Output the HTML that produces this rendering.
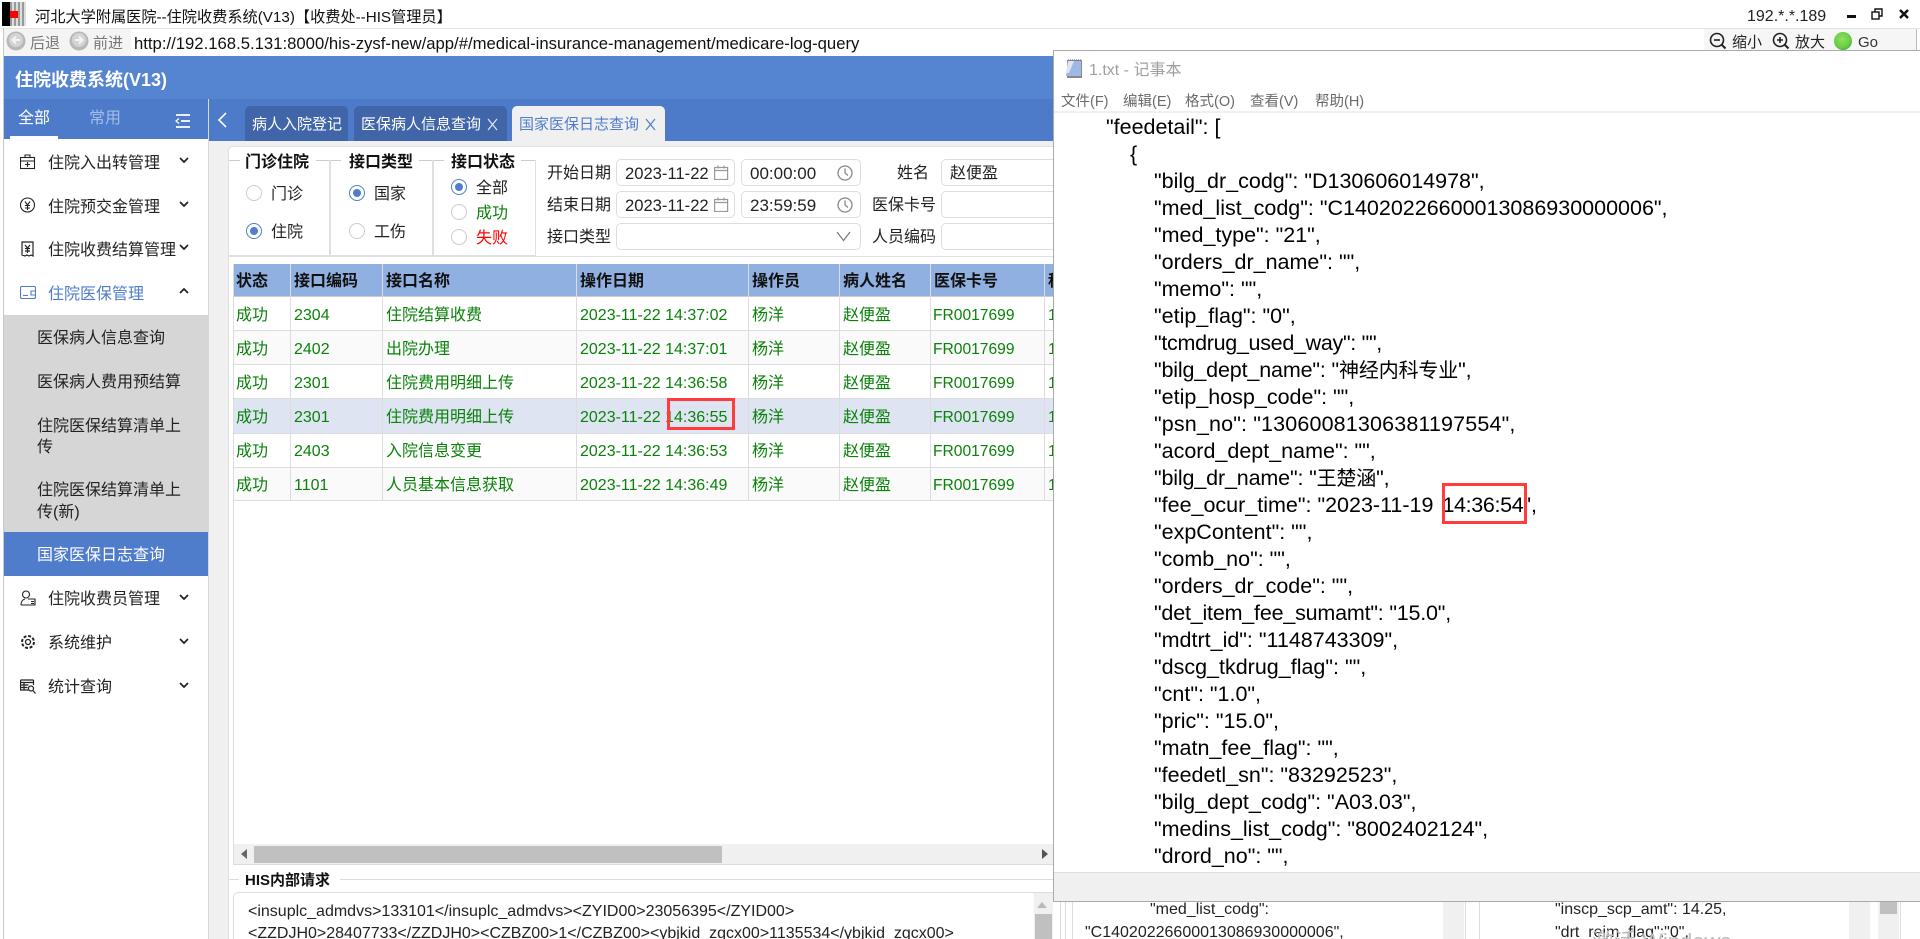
<!DOCTYPE html>
<html><head><meta charset="utf-8"><style>
html,body{margin:0;padding:0;width:1920px;height:939px;overflow:hidden;background:#fff}
body{font-family:"Liberation Sans","Noto Sans CJK SC",sans-serif;color:#111;position:relative}
.a,.t,svg{position:absolute}
.t{white-space:nowrap;line-height:20px;height:20px;margin-top:2px}
.p1{margin-top:1px}
.p0{margin-top:0}
.m{font-size:16px;left:48px;color:#222}
.s{font-size:16px;left:37px;color:#222}
.h{font-size:16px;font-weight:bold;top:270px;color:#111}
.g{font-size:16px;color:#0a820a}
.f{font-size:15.6px}
.l{font-size:16px;color:#222}
.v{font-size:17px;color:#222;margin-top:1px}
.i{background:#fff;border:1px solid #ddd;border-radius:5px;box-sizing:border-box}
.n{font-size:21.5px;left:1154px;color:#000;line-height:27px;height:27px;margin-top:1px}
.n b{font-weight:normal;font-size:20px}
.r{width:14px;height:14px;border:1px solid #ccc;border-radius:50%;background:#fff}
.rc{width:14px;height:14px;border:1px solid #4f7ccb;border-radius:50%;background:#fff}
.rc:after{content:"";position:absolute;left:3px;top:3px;width:8px;height:8px;border-radius:50%;background:#4f7ccb}
</style></head><body>

<!-- title bar -->
<div class="a" style="left:2px;top:2px;width:8px;height:24px;background:#000"></div>
<div class="a" style="left:10px;top:2px;width:16px;height:24px;background:repeating-linear-gradient(90deg,#999 0 2px,#ddd 2px 4px)"></div>
<div class="a" style="left:10px;top:11px;width:8px;height:7px;background:#f00"></div>
<div class="t" style="left:35px;top:6px;font-size:15.2px">河北大学附属医院--住院收费系统(V13)【收费处--HIS管理员】</div>
<div class="t p1" style="left:1747px;top:6px;font-size:16px;color:#222">192.*.*.189</div>
<div class="a" style="left:1847px;top:15px;width:9px;height:3px;background:#111"></div>
<svg style="left:1871px;top:8px" width="12" height="12" viewBox="0 0 12 12" fill="none" stroke="#111" stroke-width="1.4"><rect x="1" y="4" width="7" height="7"/><path d="M4 4V1h7v7H8"/></svg>
<svg style="left:1898px;top:8px" width="12" height="12" viewBox="0 0 12 12" fill="none" stroke="#111" stroke-width="2.4"><path d="M2 2l8 8M10 2l-8 8"/></svg>

<!-- address bar -->
<div class="a" style="left:0;top:28px;width:1920px;height:1px;background:#e2e2e2"></div>
<div class="a" style="left:3px;top:28px;width:1px;height:911px;background:#c8c8c8"></div>
<div class="a" style="left:4px;top:29px;width:127px;height:27px;background:#f4f4f4"></div>
<svg style="left:6px;top:30px" width="20" height="22" viewBox="0 0 20 22"><circle cx="10" cy="11" r="9.500" fill="#b8b8b8"/><circle cx="10" cy="10" r="7" fill="#d4d4d4"/><path d="M14 10H7M10 6.500L6.500 10l3.500 3.500" fill="none" stroke="#f4f4f4" stroke-width="2"/></svg>
<div class="t" style="left:30px;top:32px;font-size:15px;color:#777">后退</div>
<svg style="left:69px;top:30px" width="20" height="22" viewBox="0 0 20 22"><circle cx="10" cy="11" r="9.500" fill="#b8b8b8"/><circle cx="10" cy="10" r="7" fill="#d4d4d4"/><path d="M6 10h7M10 6.500l3.500 3.500-3.500 3.500" fill="none" stroke="#f4f4f4" stroke-width="2"/></svg>
<div class="t" style="left:93px;top:32px;font-size:15px;color:#777">前进</div>
<div class="t" style="left:134px;top:32px;font-size:16.7px;color:#111">http://192.168.5.131:8000/his-zysf-new/app/#/medical-insurance-management/medicare-log-query</div>
<div class="a" style="left:1704px;top:29px;width:212px;height:21px;background:#f6f6f6"></div>
<svg style="left:1709px;top:32px" width="18" height="18" viewBox="0 0 18 18" fill="none" stroke="#222" stroke-width="1.6"><circle cx="8" cy="8" r="6.5"/><path d="M5 8h6"/><path d="M12.5 12.5l4 4" stroke-width="2"/></svg>
<div class="t p1" style="left:1732px;top:32px;font-size:15px;color:#222">缩小</div>
<svg style="left:1772px;top:32px" width="18" height="18" viewBox="0 0 18 18" fill="none" stroke="#222" stroke-width="1.6"><circle cx="8" cy="8" r="6.5"/><path d="M5 8h6M8 5v6"/><path d="M12.5 12.5l4 4" stroke-width="2"/></svg>
<div class="t p1" style="left:1795px;top:32px;font-size:15px;color:#222">放大</div>
<div class="a" style="left:1834px;top:32px;width:18px;height:18px;border-radius:50%;background:radial-gradient(circle at 45% 40%,#8fe060 0,#66cc44 60%,#0a7a1a 100%)"></div>
<div class="t p1" style="left:1858px;top:32px;font-size:15px;color:#333">Go</div>
<div class="a" style="left:1916px;top:29px;width:1px;height:21px;background:#bbb"></div>

<!-- app header -->
<div class="a" style="left:4px;top:56px;width:1049px;height:43px;background:#5585d0"></div>
<div class="t" style="left:15px;top:68px;font-size:18px;font-weight:bold;color:#fff">住院收费系统(V13)</div>
<div class="a" style="left:4px;top:99px;width:1049px;height:42px;background:#4d7bca"></div>
<div class="a" style="left:208px;top:99px;width:1px;height:840px;background:#d8d8d8"></div>

<div class="t p1" style="left:18px;top:108px;font-size:16px;color:#fff">全部</div>
<div class="t p1" style="left:89px;top:108px;font-size:16px;color:#a5bde6">常用</div>
<div class="a" style="left:10px;top:136px;width:48px;height:3px;background:#fff"></div>
<svg style="left:175px;top:113px" width="16" height="16" viewBox="0 0 16 16" fill="none" stroke="#fff" stroke-width="1.8"><path d="M1 2h14M6 8h9M1 14h14"/><path d="M4 5.5L1 8l3 2.5" stroke-width="1.2"/></svg>

<!-- sidebar -->
<div class="a" style="left:4px;top:139px;width:204px;height:800px;background:#fff"></div>
<svg style="left:20px;top:154px" width="16" height="16" viewBox="0 0 16 16" fill="none" stroke="#222" stroke-width="1.1"><rect x=".5" y="3.5" width="14" height="11"/><path d="M5 3.500V1h5v2.500M.5 7h14M7.500 8v5M5 10.500h5"/></svg>
<div class="t m" style="top:152px">住院入出转管理</div>
<svg style="left:20px;top:197px" width="16" height="16" viewBox="0 0 16 16" fill="none" stroke="#222" stroke-width="1.1"><circle cx="7.500" cy="8" r="7"/><path d="M5 4.500l2.500 3.500 2.500-3.500M5 8.500h5M5 11h5M7.500 8v5"/></svg>
<div class="t m" style="top:196px">住院预交金管理</div>
<svg style="left:20px;top:241px" width="16" height="16" viewBox="0 0 16 16" fill="none" stroke="#222" stroke-width="1.2"><path d="M2 1h11v14l-2-1-2 1-2-1-2 1-3-1z"/><path d="M5 4l2.500 3L10 4M5 7.500h5M5 10h5M7.500 7v5"/></svg>
<div class="t m" style="top:239px">住院收费结算管理</div>
<svg style="left:20px;top:286px" width="16" height="14" viewBox="0 0 16 14" fill="none" stroke="#4f7ccb" stroke-width="1.1"><rect x=".5" y=".5" width="15" height="12" rx="1.500"/><path d="M11 5h4.500v4H11zM3 9.500h5"/></svg>
<div class="t m" style="top:283px;color:#4f7ccb">住院医保管理</div>
<svg style="left:179px;top:194px" width="10" height="30" viewBox="0 0 10 30" fill="none" stroke="#222" stroke-width="1.7"><path d="M1 8l4 4 4-4"/></svg>
<svg style="left:179px;top:150px" width="10" height="30" viewBox="0 0 10 30" fill="none" stroke="#222" stroke-width="1.7"><path d="M1 8l4 4 4-4"/></svg>
<svg style="left:179px;top:237px" width="10" height="30" viewBox="0 0 10 30" fill="none" stroke="#222" stroke-width="1.7"><path d="M1 8l4 4 4-4"/></svg>
<svg style="left:179px;top:281px" width="10" height="30" viewBox="0 0 10 30" fill="none" stroke="#222" stroke-width="1.7"><path d="M1 12l4-4 4 4"/></svg>

<div class="a" style="left:4px;top:315px;width:204px;height:217px;background:#d6d6d6"></div>
<div class="t s" style="top:327px">医保病人信息查询</div>
<div class="t s" style="top:371px">医保病人费用预结算</div>
<div class="t s" style="top:415px">住院医保结算清单上</div>
<div class="t s" style="top:436px">传</div>
<div class="t s" style="top:479px">住院医保结算清单上</div>
<div class="t s" style="top:501px">传(新)</div>
<div class="a" style="left:4px;top:532px;width:204px;height:44px;background:#4f7ccb"></div>
<div class="t s" style="top:544px;color:#fff">国家医保日志查询</div>

<svg style="left:20px;top:590px" width="16" height="16" viewBox="0 0 16 16" fill="none" stroke="#222" stroke-width="1.1"><circle cx="6" cy="4.500" r="3.500"/><path d="M1 15c0-4 2-5.500 4-6M8 9h7v6H1M11 11.500h3M11 13.500h3"/></svg>
<div class="t m" style="top:588px">住院收费员管理</div>
<svg style="left:179px;top:587px" width="10" height="30" viewBox="0 0 10 30" fill="none" stroke="#222" stroke-width="1.7"><path d="M1 8l4 4 4-4"/></svg>
<svg style="left:20px;top:634px" width="16" height="16" viewBox="0 0 16 16" fill="none" stroke="#222" stroke-width="1.300"><circle cx="8" cy="8" r="2.500"/><circle cx="8" cy="8" r="6" stroke-dasharray="3 1.700" stroke-width="2"/></svg>
<div class="t m" style="top:632px">系统维护</div>
<svg style="left:179px;top:631px" width="10" height="30" viewBox="0 0 10 30" fill="none" stroke="#222" stroke-width="1.7"><path d="M1 8l4 4 4-4"/></svg>
<svg style="left:20px;top:679px" width="16" height="15" viewBox="0 0 16 15" fill="none" stroke="#222" stroke-width="1.200"><path d="M.5 1h13M.5 3.500h13M.5 1v10h8M13.500 1v5M.5 6h8M.5 8.500h7M4 3.500V11"/><circle cx="11" cy="9.500" r="2.500"/><path d="M13 11.500l2.500 3"/></svg>
<div class="t m" style="top:676px">统计查询</div>
<svg style="left:179px;top:675px" width="10" height="30" viewBox="0 0 10 30" fill="none" stroke="#222" stroke-width="1.7"><path d="M1 8l4 4 4-4"/></svg>

<!-- tabs -->
<svg style="left:217px;top:111px" width="12" height="18" viewBox="0 0 12 18" fill="none" stroke="#fff" stroke-width="1.600"><path d="M9 2L2 9l7 7"/></svg>
<div class="a" style="left:245px;top:106px;width:103px;height:35px;background:#4065a8;border-radius:5px 5px 0 0"></div>
<div class="t p1" style="left:252px;top:114px;font-size:15px;color:#fff">病人入院登记</div>
<div class="a" style="left:354px;top:106px;width:153px;height:35px;background:#4065a8;border-radius:5px 5px 0 0"></div>
<div class="t p1" style="left:361px;top:114px;font-size:15px;color:#fff">医保病人信息查询</div>
<svg style="left:487px;top:118px" width="11" height="13" viewBox="0 0 11 13" fill="none" stroke="#dfe7f5" stroke-width="1.200"><path d="M1 1l9 11M10 1L1 12"/></svg>
<div class="a" style="left:512px;top:106px;width:153px;height:35px;background:#f0f0f0;border-radius:5px 5px 0 0"></div>
<div class="t p1" style="left:519px;top:114px;font-size:15px;color:#4f7ccb">国家医保日志查询</div>
<svg style="left:645px;top:118px" width="11" height="13" viewBox="0 0 11 13" fill="none" stroke="#4f7ccb" stroke-width="1.200"><path d="M1 1l9 11M10 1L1 12"/></svg>

<!-- main -->
<div class="a" style="left:209px;top:141px;width:844px;height:798px;background:#f0f0f0"></div>
<div class="a" style="left:228px;top:146px;width:825px;height:793px;background:#fff;border-radius:5px 0 0 0;border:1px solid #e0e0e0;box-sizing:border-box;border-right:0;border-bottom:0"></div>

<!-- groups -->
<div class="a" style="left:229px;top:160px;width:11px;height:1px;background:#ccc"></div>
<div class="a" style="left:316px;top:160px;width:14px;height:1px;background:#ccc"></div>
<div class="t" style="left:245px;top:151px;font-size:16px;font-weight:bold">门诊住院</div>
<div class="a" style="left:329px;top:160px;width:2px;height:96px;background:#e0e0e0"></div>
<div class="a" style="left:331px;top:160px;width:10px;height:1px;background:#ccc"></div>
<div class="a" style="left:419px;top:160px;width:14px;height:1px;background:#ccc"></div>
<div class="t" style="left:349px;top:151px;font-size:16px;font-weight:bold">接口类型</div>
<div class="a" style="left:432px;top:160px;width:2px;height:96px;background:#e0e0e0"></div>
<div class="a" style="left:434px;top:160px;width:10px;height:1px;background:#ccc"></div>
<div class="a" style="left:521px;top:160px;width:15px;height:1px;background:#ccc"></div>
<div class="t" style="left:451px;top:151px;font-size:16px;font-weight:bold">接口状态</div>
<div class="a" style="left:535px;top:160px;width:1px;height:96px;background:#e0e0e0"></div>
<div class="a" style="left:229px;top:255px;width:307px;height:2px;background:#e0e0e0"></div>

<div class="a r" style="left:246px;top:185px"></div><div class="t l" style="left:271px;top:183px">门诊</div>
<div class="a rc" style="left:246px;top:223px"></div><div class="t l" style="left:271px;top:221px">住院</div>
<div class="a rc" style="left:349px;top:185px"></div><div class="t l" style="left:374px;top:183px">国家</div>
<div class="a r" style="left:349px;top:223px"></div><div class="t l" style="left:374px;top:221px">工伤</div>
<div class="a rc" style="left:451px;top:179px"></div><div class="t l" style="left:476px;top:177px">全部</div>
<div class="a r" style="left:451px;top:204px"></div><div class="t l" style="left:476px;top:202px;color:#0a820a">成功</div>
<div class="a r" style="left:451px;top:229px"></div><div class="t l" style="left:476px;top:227px;color:#f00">失败</div>

<div class="t l p1" style="left:547px;top:163px">开始日期</div>
<div class="t l p1" style="left:547px;top:195px">结束日期</div>
<div class="t l p1" style="left:547px;top:227px">接口类型</div>

<div class="a i" style="left:616px;top:159px;width:119px;height:27px"></div>
<div class="t v" style="left:625px;top:163px;font-size:16.6px">2023-11-22</div>
<svg style="left:714px;top:165px" width="15" height="15" viewBox="0 0 15 15" fill="none" stroke="#999" stroke-width="1.200"><rect x=".6" y="2.500" width="13" height="12"/><path d="M.6 5.500h13M4 .5v3M10 .5v3"/></svg>
<div class="a i" style="left:741px;top:159px;width:120px;height:27px"></div>
<div class="t v" style="left:750px;top:163px">00:00:00</div>
<svg style="left:837px;top:165px" width="16" height="16" viewBox="0 0 16 16" fill="none" stroke="#888" stroke-width="1.300"><circle cx="8" cy="8" r="7"/><path d="M8 3.500V8l3 2.500"/></svg>
<div class="a i" style="left:616px;top:191px;width:119px;height:27px"></div>
<div class="t v" style="left:625px;top:195px;font-size:16.6px">2023-11-22</div>
<svg style="left:714px;top:197px" width="15" height="15" viewBox="0 0 15 15" fill="none" stroke="#999" stroke-width="1.200"><rect x=".6" y="2.500" width="13" height="12"/><path d="M.6 5.500h13M4 .5v3M10 .5v3"/></svg>
<div class="a i" style="left:741px;top:191px;width:120px;height:27px"></div>
<div class="t v" style="left:750px;top:195px">23:59:59</div>
<svg style="left:837px;top:197px" width="16" height="16" viewBox="0 0 16 16" fill="none" stroke="#888" stroke-width="1.300"><circle cx="8" cy="8" r="7"/><path d="M8 3.500V8l3 2.500"/></svg>
<div class="a i" style="left:616px;top:223px;width:245px;height:27px"></div>
<svg style="left:836px;top:231px" width="15" height="11" viewBox="0 0 15 11" fill="none" stroke="#777" stroke-width="1.200"><path d="M1 1l6.500 8.500L14 1"/></svg>

<div class="t l p1" style="left:897px;top:163px">姓名</div>
<div class="t l p1" style="left:872px;top:195px">医保卡号</div>
<div class="t l p1" style="left:872px;top:227px">人员编码</div>
<div class="a i" style="left:941px;top:159px;width:130px;height:27px"></div>
<div class="t l p1" style="left:950px;top:163px">赵便盈</div>
<div class="a i" style="left:941px;top:191px;width:130px;height:27px"></div>
<div class="a i" style="left:941px;top:223px;width:130px;height:27px"></div>

<!-- table -->
<div class="a" style="left:233px;top:256px;width:820px;height:1px;background:#e0e0e0"></div>
<div class="a" style="left:233px;top:264px;width:1px;height:600px;background:#ddd"></div>
<div class="a" style="left:234px;top:264px;width:819px;height:33px;background:#90b0e1"></div>
<div class="a" style="left:234px;top:297px;width:819px;height:33px;background:#fff"></div>
<div class="a" style="left:234px;top:331px;width:819px;height:33px;background:#fafafa"></div>
<div class="a" style="left:234px;top:399px;width:819px;height:34px;background:#dee4f2"></div>
<div class="a" style="left:234px;top:468px;width:819px;height:32px;background:#fafafa"></div>
<div class="a" style="left:234px;top:296px;width:819px;height:1px;background:#ccc"></div>
<div class="a" style="left:234px;top:330px;width:819px;height:1px;background:#ddd"></div>
<div class="a" style="left:234px;top:364px;width:819px;height:1px;background:#ddd"></div>
<div class="a" style="left:234px;top:398px;width:819px;height:1px;background:#ddd"></div>
<div class="a" style="left:234px;top:433px;width:819px;height:1px;background:#ddd"></div>
<div class="a" style="left:234px;top:467px;width:819px;height:1px;background:#ddd"></div>
<div class="a" style="left:234px;top:500px;width:819px;height:1px;background:#ddd"></div>
<div class="a" style="left:290px;top:264px;width:1px;height:237px;background:#ddd"></div>
<div class="a" style="left:382px;top:264px;width:1px;height:237px;background:#ddd"></div>
<div class="a" style="left:576px;top:264px;width:1px;height:237px;background:#ddd"></div>
<div class="a" style="left:748px;top:264px;width:1px;height:237px;background:#ddd"></div>
<div class="a" style="left:839px;top:264px;width:1px;height:237px;background:#ddd"></div>
<div class="a" style="left:930px;top:264px;width:1px;height:237px;background:#ddd"></div>
<div class="a" style="left:1044px;top:264px;width:1px;height:237px;background:#ddd"></div>

<div class="t h" style="left:236px">状态</div><div class="t h" style="left:294px">接口编码</div><div class="t h" style="left:386px">接口名称</div><div class="t h" style="left:580px">操作日期</div><div class="t h" style="left:752px">操作员</div><div class="t h" style="left:843px">病人姓名</div><div class="t h" style="left:934px">医保卡号</div><div class="t h" style="left:1048px">科室</div>

<div class="t g" style="left:236px;top:304px">成功</div><div class="t g" style="left:294px;top:304px">2304</div><div class="t g" style="left:386px;top:304px">住院结算收费</div><div class="t g" style="left:580px;top:304px">2023-11-22 14:37:02</div><div class="t g" style="left:752px;top:304px">杨洋</div><div class="t g" style="left:843px;top:304px">赵便盈</div><div class="t g f" style="left:933px;top:304px">FR0017699</div><div class="t g" style="left:1048px;top:304px">1</div>
<div class="t g" style="left:236px;top:338px">成功</div><div class="t g" style="left:294px;top:338px">2402</div><div class="t g" style="left:386px;top:338px">出院办理</div><div class="t g" style="left:580px;top:338px">2023-11-22 14:37:01</div><div class="t g" style="left:752px;top:338px">杨洋</div><div class="t g" style="left:843px;top:338px">赵便盈</div><div class="t g f" style="left:933px;top:338px">FR0017699</div><div class="t g" style="left:1048px;top:338px">1</div>
<div class="t g" style="left:236px;top:372px">成功</div><div class="t g" style="left:294px;top:372px">2301</div><div class="t g" style="left:386px;top:372px">住院费用明细上传</div><div class="t g" style="left:580px;top:372px">2023-11-22 14:36:58</div><div class="t g" style="left:752px;top:372px">杨洋</div><div class="t g" style="left:843px;top:372px">赵便盈</div><div class="t g f" style="left:933px;top:372px">FR0017699</div><div class="t g" style="left:1048px;top:372px">1</div>
<div class="t g" style="left:236px;top:406px">成功</div><div class="t g" style="left:294px;top:406px">2301</div><div class="t g" style="left:386px;top:406px">住院费用明细上传</div><div class="t g" style="left:580px;top:406px">2023-11-22 14:36:55</div><div class="t g" style="left:752px;top:406px">杨洋</div><div class="t g" style="left:843px;top:406px">赵便盈</div><div class="t g f" style="left:933px;top:406px">FR0017699</div><div class="t g" style="left:1048px;top:406px">1</div>
<div class="t g" style="left:236px;top:440px">成功</div><div class="t g" style="left:294px;top:440px">2403</div><div class="t g" style="left:386px;top:440px">入院信息变更</div><div class="t g" style="left:580px;top:440px">2023-11-22 14:36:53</div><div class="t g" style="left:752px;top:440px">杨洋</div><div class="t g" style="left:843px;top:440px">赵便盈</div><div class="t g f" style="left:933px;top:440px">FR0017699</div><div class="t g" style="left:1048px;top:440px">1</div>
<div class="t g" style="left:236px;top:474px">成功</div><div class="t g" style="left:294px;top:474px">1101</div><div class="t g" style="left:386px;top:474px">人员基本信息获取</div><div class="t g" style="left:580px;top:474px">2023-11-22 14:36:49</div><div class="t g" style="left:752px;top:474px">杨洋</div><div class="t g" style="left:843px;top:474px">赵便盈</div><div class="t g f" style="left:933px;top:474px">FR0017699</div><div class="t g" style="left:1048px;top:474px">1</div>

<div class="a" style="left:667px;top:398px;width:68px;height:32px;border:3px solid #ff3b3b;box-sizing:border-box"></div>

<!-- horizontal scrollbar -->
<div class="a" style="left:234px;top:844px;width:819px;height:20px;background:#f0f0f0"></div>
<div class="a" style="left:254px;top:846px;width:468px;height:17px;background:#c0c0c0"></div>
<div class="a" style="left:241px;top:849px;border:5px solid transparent;border-right:6px solid #666;border-left:0"></div>
<div class="a" style="left:1042px;top:849px;border:5px solid transparent;border-left:6px solid #555;border-right:0"></div>
<div class="a" style="left:233px;top:864px;width:820px;height:1px;background:#ddd"></div>

<!-- HIS -->
<div class="a" style="left:228px;top:879px;width:11px;height:1px;background:#ddd"></div>
<div class="a" style="left:340px;top:879px;width:713px;height:1px;background:#ddd"></div>
<div class="t p1" style="left:245px;top:870px;font-size:15px;font-weight:bold">HIS内部请求</div>
<div class="a" style="left:233px;top:892px;width:820px;height:60px;border:1px solid #ddd;border-radius:5px 0 0 0;box-sizing:border-box;border-right:0"></div>
<div class="t p1" style="left:248px;top:901px;font-size:16px;color:#222">&lt;insuplc_admdvs&gt;133101&lt;/insuplc_admdvs&gt;&lt;ZYID00&gt;23056395&lt;/ZYID00&gt;</div>
<div class="t p1" style="left:248px;top:923px;font-size:16px;color:#222">&lt;ZZDJH0&gt;28407733&lt;/ZZDJH0&gt;&lt;CZBZ00&gt;1&lt;/CZBZ00&gt;&lt;ybjkid_zgcx00&gt;1135534&lt;/ybjkid_zgcx00&gt;</div>
<div class="a" style="left:1034px;top:893px;width:19px;height:46px;background:#f0f0f0"></div>
<div class="a" style="left:1037px;top:902px;border:5px solid transparent;border-bottom:6px solid #bbb;border-top:0"></div>
<div class="a" style="left:1035px;top:914px;width:17px;height:25px;background:#c0c0c0"></div>

<!-- notepad -->
<div class="a" style="left:1053px;top:50px;width:867px;height:852px;background:#fff;border-top:1px solid #aaa;border-left:1px solid #aaa;border-bottom:1px solid #aaa;box-sizing:border-box"></div>
<svg style="left:1064px;top:59px" width="19" height="20" viewBox="0 0 19 20"><rect x="3" y="1" width="15" height="18" fill="#888"/><path d="M4 2h13v15H2z" fill="#9db9e4"/><path d="M4 2h6L5 14H2z" fill="#dde6f4"/><path d="M4 1h14" stroke="#666" stroke-dasharray="1 1"/></svg>
<div class="t p1" style="left:1089px;top:60px;font-size:16px;color:#a0a0a0">1.txt - 记事本</div>
<div class="t p1" style="left:1061px;top:91px;font-size:14.5px;color:#6a6a6a">文件(F)</div>
<div class="t p1" style="left:1123px;top:91px;font-size:14.5px;color:#6a6a6a">编辑(E)</div>
<div class="t p1" style="left:1185px;top:91px;font-size:14.5px;color:#6a6a6a">格式(O)</div>
<div class="t p1" style="left:1250px;top:91px;font-size:14.5px;color:#6a6a6a">查看(V)</div>
<div class="t p1" style="left:1315px;top:91px;font-size:14.5px;color:#6a6a6a">帮助(H)</div>
<div class="a" style="left:1054px;top:111px;width:866px;height:2px;background:#f0f0f0"></div>

<div class="t n" style="left:1106px;top:113px">"feedetail": [</div>
<div class="t n" style="left:1130px;top:140px">{</div>
<div class="t n" style="top:167px">"bilg_dr_codg": "D130606014978",</div>
<div class="t n" style="top:194px">"med_list_codg": "C14020226600013086930000006",</div>
<div class="t n" style="top:221px">"med_type": "21",</div>
<div class="t n" style="top:248px">"orders_dr_name": "",</div>
<div class="t n" style="top:275px">"memo": "",</div>
<div class="t n" style="top:302px">"etip_flag": "0",</div>
<div class="t n" style="top:329px;letter-spacing:-.3px">"tcmdrug_used_way": "",</div>
<div class="t n" style="top:356px;letter-spacing:-.15px">"bilg_dept_name": "<b>神经内科专业</b>",</div>
<div class="t n" style="top:383px">"etip_hosp_code": "",</div>
<div class="t n" style="top:410px;letter-spacing:.15px">"psn_no": "13060081306381197554",</div>
<div class="t n" style="top:437px">"acord_dept_name": "",</div>
<div class="t n" style="top:464px;letter-spacing:-.15px">"bilg_dr_name": "<b>王楚涵</b>",</div>
<div class="t n" style="top:491px">"fee_ocur_time": "2023-11-19 <span style="margin-left:3px;letter-spacing:-.35px">14:36:54</span>",</div>
<div class="t n" style="top:518px">"expContent": "",</div>
<div class="t n" style="top:545px">"comb_no": "",</div>
<div class="t n" style="top:572px">"orders_dr_code": "",</div>
<div class="t n" style="top:599px;letter-spacing:-.2px">"det_item_fee_sumamt": "15.0",</div>
<div class="t n" style="top:626px">"mdtrt_id": "1148743309",</div>
<div class="t n" style="top:653px">"dscg_tkdrug_flag": "",</div>
<div class="t n" style="top:680px">"cnt": "1.0",</div>
<div class="t n" style="top:707px">"pric": "15.0",</div>
<div class="t n" style="top:734px">"matn_fee_flag": "",</div>
<div class="t n" style="top:761px">"feedetl_sn": "83292523",</div>
<div class="t n" style="top:788px">"bilg_dept_codg": "A03.03",</div>
<div class="t n" style="top:815px">"medins_list_codg": "8002402124",</div>
<div class="t n" style="top:842px">"drord_no": "",</div>
<div class="a" style="left:1442px;top:483px;width:85px;height:41px;border:3px solid #ff3b3b;box-sizing:border-box"></div>
<div class="a" style="left:1054px;top:872px;width:866px;height:29px;background:#f0f0f0;border-top:1px solid #ddd;box-sizing:border-box"></div>

<!-- behind notepad -->
<div class="a" style="left:1053px;top:902px;width:867px;height:37px;background:#fff"></div>
<div class="a" style="left:1060px;top:902px;width:1px;height:37px;background:#ddd"></div>
<div class="a" style="left:1065px;top:902px;width:1px;height:37px;background:#ddd"></div>
<div class="a" style="left:1072px;top:902px;width:1px;height:37px;background:#ddd"></div>
<div class="t p0" style="left:1150px;top:900px;font-size:16px;color:#222">"med_list_codg":</div>
<div class="t p0" style="left:1085px;top:923px;font-size:16px;color:#222">"C14020226600013086930000006",</div>
<div class="a" style="left:1443px;top:902px;width:21px;height:37px;background:#f0f0f0"></div>
<div class="a" style="left:1465px;top:902px;width:1px;height:37px;background:#ddd"></div>
<div class="a" style="left:1479px;top:902px;width:1px;height:37px;background:#ddd"></div>
<div class="t p0" style="left:1555px;top:900px;font-size:16px;color:#222">"inscp_scp_amt": 14.25,</div>
<div class="t p0" style="left:1555px;top:923px;font-size:16px;color:#222">"drt_reim_flag":"0",</div>
<div class="t p0" style="left:1592px;top:932px;font-size:22px;color:#bbb">激活 Windows</div>
<div class="a" style="left:1849px;top:902px;width:21px;height:37px;background:#f0f0f0"></div>
<div class="a" style="left:1878px;top:902px;width:21px;height:37px;background:#f0f0f0"></div>
<div class="a" style="left:1880px;top:902px;width:17px;height:12px;background:#c0c0c0"></div>
<div class="a" style="left:1900px;top:902px;width:1px;height:37px;background:#ddd"></div>
</body></html>
